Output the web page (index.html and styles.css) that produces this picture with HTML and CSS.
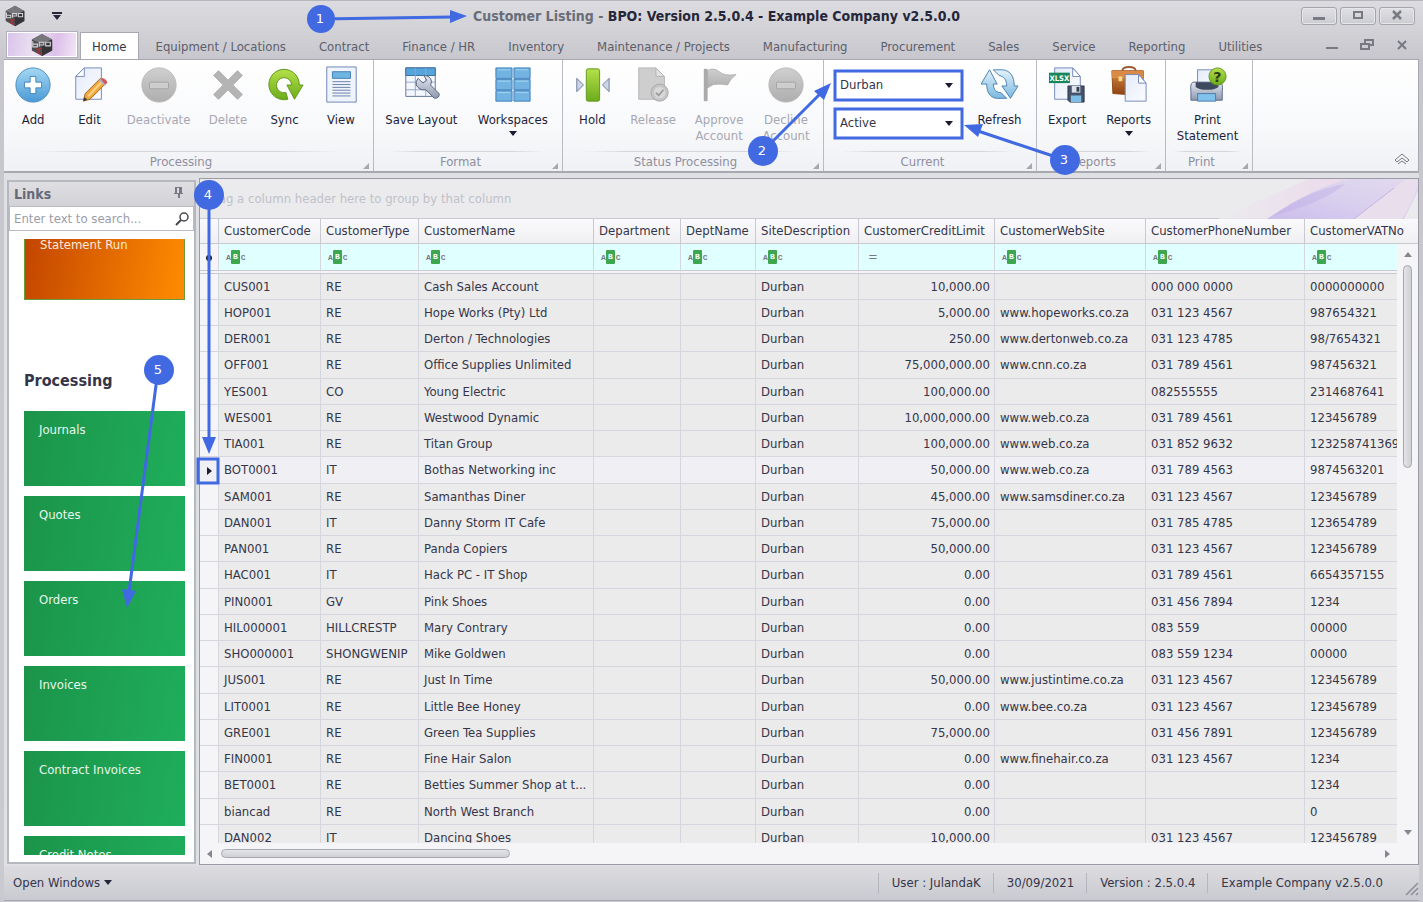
FILE: index.html
```html
<!DOCTYPE html>
<html lang="en">
<head>
<meta charset="UTF-8">
<meta name="viewport" content="width=device-width, initial-scale=1.0">
<title>Customer Listing - BPO</title>
<link rel="stylesheet" href="styles.css">
</head>
<body>

<!-- shared gradients and symbols -->
<svg class="defs" aria-hidden="true">
    <defs>
        <linearGradient id="blue" x1="0" y1="0" x2="0" y2="1"><stop offset="0" stop-color="#a5d8f3"/><stop offset="1" stop-color="#4a9ad6"/></linearGradient>
        <linearGradient id="pale" x1="0" y1="0" x2="0" y2="1"><stop offset="0" stop-color="#e2f2fb"/><stop offset="1" stop-color="#7ab8e0"/></linearGradient>
        <linearGradient id="green" x1="0" y1="0" x2="0" y2="1"><stop offset="0" stop-color="#b4e04a"/><stop offset="1" stop-color="#6dab1b"/></linearGradient>
        <linearGradient id="grey" x1="0" y1="0" x2="0" y2="1"><stop offset="0" stop-color="#cfcfcf"/><stop offset="1" stop-color="#aeaeae"/></linearGradient>
        <linearGradient id="paper" x1="0" y1="0" x2="1" y2="1"><stop offset="0" stop-color="#e4ebfa"/><stop offset="1" stop-color="#fbfcff"/></linearGradient>
        <linearGradient id="brown" x1="0" y1="0" x2="0" y2="1"><stop offset="0" stop-color="#d98a3d"/><stop offset="1" stop-color="#8f4312"/></linearGradient>
        <linearGradient id="steel" x1="0" y1="0" x2="0" y2="1"><stop offset="0" stop-color="#e3e8f1"/><stop offset="1" stop-color="#8d99ae"/></linearGradient>
        <linearGradient id="violet" x1="0" y1="1" x2="1" y2="0"><stop offset="0" stop-color="#cbbdec"/><stop offset="0.5" stop-color="#d9d0ee"/><stop offset="1" stop-color="#e2daee"/></linearGradient>
        <linearGradient id="pink" x1="0" y1="0" x2="1" y2="0"><stop offset="0" stop-color="#ebebee"/><stop offset="1" stop-color="#ecd3ea"/></linearGradient>
    </defs>
    <symbol id="minus" viewBox="0 0 40 40">
        <circle cx="20" cy="20" r="18" fill="url(#grey)" stroke="#b8b8b8"/>
        <rect x="10" y="17" width="20" height="7" rx="1" fill="#cdcdcd" stroke="#a2a2a2"/>
    </symbol>
    <symbol id="logo" viewBox="0 0 26 26">
        <path d="M13 1l11 6v12l-11 6-11-6V7z" fill="#4b4b50"/>
        <path d="M13 1l11 6-11 5L2 7z" fill="#77777c"/>
        <path d="M13 12v13l11-6V7z" fill="#343438"/>
        <path d="M3 9v6h5v-3H3M10 15v-5h5v3h-5M17 10h5v4h-5z" fill="none" stroke="#d4d4d8" stroke-width="1.2"/>
        <path d="M7 18l4-1-3 4 5 2" fill="none" stroke="#b03030" stroke-width="1.4"/>
    </symbol>
    <symbol id="corner" viewBox="0 0 6 6"><path d="M6 0v6H0z" fill="#a7a8ae"/></symbol>
    <symbol id="down" viewBox="0 0 10 6"><path d="M0 0h10L5 6z" fill="#1c1c30"/></symbol>
</svg>

<div class="window">

    <header class="titlebar">
        <svg class="app-icon"><use href="#logo"/></svg>
        <button class="quick" aria-label="Customize toolbar"><svg width="10" height="8"><path d="M0 0h10v2H0zM1 3h8L5 8z" fill="#26263a"/></svg></button>
        <h1><span>Customer Listing -</span> BPO: Version 2.5.0.4 - Example Company v2.5.0.0</h1>
        <div class="win-buttons">
            <button aria-label="Minimize"><svg width="12" height="12"><path d="M0 8h12v3H0z" fill="#777983"/></svg></button>
            <button aria-label="Maximize"><svg width="12" height="12"><path d="M2 3h8v6H2z" fill="none" stroke="#777983" stroke-width="2"/></svg></button>
            <button aria-label="Close"><svg width="12" height="12"><path d="M2 2l8 8M10 2l-8 8" stroke="#777983" stroke-width="2.5"/></svg></button>
        </div>
    </header>

    <nav class="tabs">
        <button class="app-menu" aria-label="Application menu"><svg><use href="#logo"/></svg></button>
        <a href="#" class="tab active">Home</a>
        <a href="#" class="tab">Equipment / Locations</a>
        <a href="#" class="tab">Contract</a>
        <a href="#" class="tab">Finance / HR</a>
        <a href="#" class="tab">Inventory</a>
        <a href="#" class="tab">Maintenance / Projects</a>
        <a href="#" class="tab">Manufacturing</a>
        <a href="#" class="tab">Procurement</a>
        <a href="#" class="tab">Sales</a>
        <a href="#" class="tab">Service</a>
        <a href="#" class="tab">Reporting</a>
        <a href="#" class="tab">Utilities</a>
        <div class="mdi-buttons">
            <button aria-label="Minimize child"><svg width="14" height="12"><path d="M1 8h12v2H1z" fill="#777983"/></svg></button>
            <button aria-label="Restore child"><svg width="14" height="12"><path d="M5 4V1h8v5h-3M1 5h8v5H1z" fill="none" stroke="#777983" stroke-width="2"/></svg></button>
            <button aria-label="Close child"><svg width="14" height="12"><path d="M3 2l8 8M11 2l-8 8" stroke="#777983" stroke-width="2"/></svg></button>
        </div>
    </nav>

    <div class="ribbon">
        <section class="group g-processing">
            <div class="items">
                <button class="big">
                    <svg viewBox="0 0 40 40"><circle cx="20" cy="20" r="18" fill="url(#blue)" stroke="#4a8cc2"/><path d="M17 11h6v6h6v6h-6v6h-6v-6h-6v-6h6z" fill="#fff" stroke="#4484ba"/></svg>
                    Add
                </button>
                <button class="big">
                    <svg viewBox="0 0 40 40"><path d="M14 2h18v33H5V11z" fill="url(#paper)" stroke="#7387b8"/><path d="M14 2v9H5z" fill="#fff" stroke="#7387b8"/><path d="M13 37l2-8L31 13l6 5-17 17z" fill="#f2a83a" stroke="#9a6320"/><path d="M18 32L34 15" stroke="#fbd68c" stroke-width="2"/><path d="M29 15l4-2 5 4-2 4z" fill="#aab4cc"/><path d="M32 14q3-2 6 3l-2 2z" fill="#d8525a" stroke="#d8525a"/><path d="M13 37l1-4 3 2z" fill="#333"/></svg>
                    Edit
                </button>
                <button class="big" disabled><svg><use href="#minus"/></svg>Deactivate</button>
                <button class="big" disabled>
                    <svg viewBox="0 0 40 40"><path d="M10 5l10 10L30 5l5 5-10 10 10 10-5 5-10-10-10 10-5-5 10-10L5 10z" fill="#b4b4b4" stroke="#a8a8a8" stroke-linejoin="round"/></svg>
                    Delete
                </button>
                <button class="big">
                    <svg viewBox="0 0 40 40"><path d="M23 35A16 16 0 1 1 35 20h4l-9 15-8-15h5a8 8 0 1 0-6 8z" fill="url(#green)" stroke="#5c971a" stroke-linejoin="round"/></svg>
                    Sync
                </button>
                <button class="big">
                    <svg viewBox="0 0 40 40"><path d="M5 1h31v37H5z" fill="#eef3fc" stroke="#6d83b4"/><path d="M11 6h19v7H11z" fill="#6eb5e2" stroke="#427fae"/><path d="M11 16.500h19M11 19.500h19M11 22.500h19M11 25.500h19M11 28.500h19M11 31.500h19" stroke="#6c7fa6"/></svg>
                    View
                </button>
            </div>
            <footer>Processing<svg><use href="#corner"/></svg></footer>
        </section>

        <section class="group g-format">
            <div class="items">
                <button class="big">
                    <svg viewBox="0 0 40 40"><path d="M4 2h31v30H4z" fill="#f4f7fd" stroke="#5f7299"/><path d="M4 2h31v8H4z" fill="#55a5dc" stroke="#3a6f9f"/><path d="M4 17h31M4 25h31M14 2v30M25 2v30" stroke="#8fa4cb"/><path d="M17 13l5 5 4-3-3-5q7 0 8 6 0 2-1 4l9 9q1 5-5 5l-9-9q-7 1-10-5-1-4 2-7z" fill="url(#steel)" stroke="#56617a"/></svg>
                    Save Layout
                </button>
                <button class="big">
                    <svg viewBox="0 0 40 40"><path d="M2 2h17v11H2zM21 2h17v11H21zM2 14h17v11H2zM21 14h17v11H21zM2 26h17v11H2zM21 26h17v11H21z" fill="#73b3e2" stroke="#3d7fba"/><path d="M4 4h13M23 4h13M4 16h13M23 16h13M4 28h13M23 28h13" stroke="#a8d5f1"/></svg>
                    Workspaces
                    <svg class="arrow"><use href="#down"/></svg>
                </button>
            </div>
            <footer>Format<svg><use href="#corner"/></svg></footer>
        </section>

        <section class="group g-status">
            <div class="items">
                <button class="big">
                    <svg viewBox="0 0 40 40"><rect x="14" y="3" width="14" height="34" rx="2" fill="url(#green)" stroke="#5d971c"/><path d="M4 13v14l7-7zM38 13v14l-7-7z" fill="#cbd6e8" stroke="#6b7896"/></svg>
                    Hold
                </button>
                <button class="big" disabled>
                    <svg viewBox="0 0 40 40"><path d="M5 2h18l9 9v24H5z" fill="#cecece" stroke="#b4b4b4"/><path d="M23 2v9h9z" fill="#e2e2e2" stroke="#b4b4b4"/><circle cx="27" cy="28" r="9" fill="#c5c5c5" stroke="#a8a8a8"/><circle cx="27" cy="28" r="6" fill="#d9d9d9"/><path d="M23 28l3 3 5-6" fill="none" stroke="#9e9e9e" stroke-width="2"/></svg>
                    Release
                </button>
                <button class="big" disabled>
                    <svg viewBox="0 0 40 40"><path d="M8 5q6-4 12 1t18 3q-6 4-9 11-5-1-9-1-6-1-12 4z" fill="url(#grey)" stroke="#b0b0b0"/><path d="M4 3h4v34H4z" fill="#aaa"/></svg>
                    Approve<br>Account
                </button>
                <button class="big" disabled><svg><use href="#minus"/></svg>Decline<br>Account</button>
            </div>
            <footer>Status Processing<svg><use href="#corner"/></svg></footer>
        </section>

        <section class="group g-current">
            <div class="items">
                <div class="combos">
                    <label class="combo"><select aria-label="Site"><option>Durban</option></select><svg><use href="#down"/></svg></label>
                    <label class="combo"><select aria-label="Status"><option>Active</option></select><svg><use href="#down"/></svg></label>
                </div>
                <button class="big">
                    <svg viewBox="0 0 40 40"><g fill="url(#pale)" stroke="#4a7fae" stroke-linejoin="round"><path d="M13 4h10c8 1 12 7 12 17h4l-8 13-9-13h5c0-7-3-10-8-11z"/><path d="M27 34H16C9 33 6 27 6 19H0L9 4l8 15h-4c0 6 3 9 8 9z"/></g></svg>
                    Refresh
                </button>
            </div>
            <footer>Current<svg><use href="#corner"/></svg></footer>
        </section>

        <section class="group g-reports">
            <div class="items">
                <button class="big">
                    <svg viewBox="0 0 40 40"><path d="M7 2h19l8 9v24H7z" fill="url(#paper)" stroke="#7387b8"/><path d="M26 2v9h8z" fill="#fff" stroke="#7387b8"/><path d="M1 7h22v11H1z" fill="#17875a"/><text x="12" y="16" class="xlsx" text-anchor="middle">XLSX</text><path d="M21 21h17v17H23l-2-2z" fill="#46536a" stroke="#2e394d"/><path d="M25 21h9v7h-9z" fill="#dbe3ef"/><path d="M30 22h3v5h-3z" fill="#333c4c"/><path d="M24 31h11v7H24z" fill="#7dbde6"/></svg>
                    Export
                </button>
                <button class="big">
                    <svg viewBox="0 0 40 40"><path d="M13 5q0-4 7-4t7 4" fill="none" stroke="#9a5a34" stroke-width="2"/><path d="M2 5h33v6l-1 18q-14 2-31 0z" fill="url(#brown)" stroke="#8e4b1c"/><path d="M2 5h33v8H2z" fill="#d98b45"/><path d="M9 11h4v5H9z" fill="#f6d98b"/><path d="M16 9h14l8 9v19H16z" fill="url(#paper)" stroke="#7387b8"/><path d="M30 9v9h8z" fill="#fff" stroke="#7387b8"/></svg>
                    Reports
                    <svg class="arrow"><use href="#down"/></svg>
                </button>
            </div>
            <footer>Reports<svg><use href="#corner"/></svg></footer>
        </section>

        <section class="group g-print">
            <div class="items">
                <button class="big">
                    <svg viewBox="0 0 40 40"><path d="M9 4h20v18H9z" fill="url(#paper)" stroke="#7387b8"/><path d="M4 17q-3 2-2 9v10h33V26q1-7-2-9z" fill="url(#steel)" stroke="#59688c"/><path d="M7 17h24v5q-4 3-12 3T7 22z" fill="#3f495e"/><path d="M9 29h19v8H9z" fill="#80c2ec" stroke="#4b7aa6"/><circle cx="30" cy="11" r="9" fill="url(#green)" stroke="#5c971a"/><text x="30" y="17" class="help" text-anchor="middle">?</text></svg>
                    Print<br>Statement
                </button>
            </div>
            <footer>Print<svg><use href="#corner"/></svg></footer>
        </section>

        <button class="collapse" aria-label="Collapse ribbon"><svg width="16" height="12"><path d="M1 7l7-6 7 6-2 2-5-4-5 4zM4 11l4-3 4 3" fill="#f4f4f6" stroke="#777983"/></svg></button>
    </div>

    <main>
        <aside class="links">
            <div class="links-head">
                <h2>Links</h2>
                <button aria-label="Pin"><svg width="10" height="11"><path d="M1 0h7v6h1v1H6v4H4V7H0V6h1z" fill="#777983"/><path d="M3 1h2v5H3z" fill="#dcdce0"/></svg></button>
            </div>
            <div class="search">
                <input type="text" placeholder="Enter text to search..." aria-label="Search links">
                <svg width="14" height="14"><circle cx="9" cy="5" r="4" fill="none" stroke="#44444c" stroke-width="1.500"/><path d="M6 8l-5 5" stroke="#44444c" stroke-width="2"/></svg>
            </div>
            <div class="tiles">
                <button class="tile orange">Statement Run</button>
                <h3>Processing</h3>
                <button class="tile">Journals</button>
                <button class="tile">Quotes</button>
                <button class="tile">Orders</button>
                <button class="tile">Invoices</button>
                <button class="tile">Contract Invoices</button>
                <button class="tile">Credit Notes</button>
            </div>
        </aside>

        <section class="grid">
            <div class="group-panel">
                <p>Drag a column header here to group by that column</p>
                <svg viewBox="0 0 200 40" width="200" height="40"><path d="M0 40L90 0h55L62 40z" fill="url(#pink)" opacity="0.8"/><path d="M50 40q30-12 50-24T144 0h15Q110 18 80 40z" fill="#f0f0f3"/><path d="M49 40Q95 8 132 0h68v40z" fill="url(#violet)"/><path d="M55 37q36-26 72-32-20 18-72 32z" fill="#bca9e6" opacity="0.4"/><path d="M136 40l52-40h12v6q-8 22-16 34z" fill="#e9dfec"/><path d="M136 40l40-31" stroke="#c9b2e4"/><path d="M200 12v28h-14z" fill="#ebebee"/></svg>
            </div>
            <div class="view">
                <table>
                    <colgroup><col class="c-mark"><col class="c-code"><col class="c-type"><col class="c-name"><col class="c-dept"><col class="c-deptname"><col class="c-site"><col class="c-limit"><col class="c-web"><col class="c-phone"><col></colgroup>
                    <thead>
                        <tr><th></th><th>CustomerCode</th><th>CustomerType</th><th>CustomerName</th><th>Department</th><th>DeptName</th><th>SiteDescription</th><th>CustomerCreditLimit</th><th>CustomerWebSite</th><th>CustomerPhoneNumber</th><th>CustomerVATNo</th></tr>
                        <tr class="filter"><td><i class="dot"></i></td><td><span class="abc">A<b>B</b>C</span></td><td><span class="abc">A<b>B</b>C</span></td><td><span class="abc">A<b>B</b>C</span></td><td><span class="abc">A<b>B</b>C</span></td><td><span class="abc">A<b>B</b>C</span></td><td><span class="abc">A<b>B</b>C</span></td><td><span class="eq">=</span></td><td><span class="abc">A<b>B</b>C</span></td><td><span class="abc">A<b>B</b>C</span></td><td><span class="abc">A<b>B</b>C</span></td></tr>
                    </thead>
                    <tbody>
                        <tr><td></td><td>CUS001</td><td>RE</td><td>Cash Sales Account</td><td></td><td></td><td>Durban</td><td>10,000.00</td><td></td><td>000 000 0000</td><td>0000000000</td></tr>
                        <tr><td></td><td>HOP001</td><td>RE</td><td>Hope Works (Pty) Ltd</td><td></td><td></td><td>Durban</td><td>5,000.00</td><td>www.hopeworks.co.za</td><td>031 123 4567</td><td>987654321</td></tr>
                        <tr><td></td><td>DER001</td><td>RE</td><td>Derton / Technologies</td><td></td><td></td><td>Durban</td><td>250.00</td><td>www.dertonweb.co.za</td><td>031 123 4785</td><td>98/7654321</td></tr>
                        <tr><td></td><td>OFF001</td><td>RE</td><td>Office Supplies Unlimited</td><td></td><td></td><td>Durban</td><td>75,000,000.00</td><td>www.cnn.co.za</td><td>031 789 4561</td><td>987456321</td></tr>
                        <tr><td></td><td>YES001</td><td>CO</td><td>Young Electric</td><td></td><td></td><td>Durban</td><td>100,000.00</td><td></td><td>082555555</td><td>2314687641</td></tr>
                        <tr><td></td><td>WES001</td><td>RE</td><td>Westwood Dynamic</td><td></td><td></td><td>Durban</td><td>10,000,000.00</td><td>www.web.co.za</td><td>031 789 4561</td><td>123456789</td></tr>
                        <tr><td></td><td>TIA001</td><td>RE</td><td>Titan Group</td><td></td><td></td><td>Durban</td><td>100,000.00</td><td>www.web.co.za</td><td>031 852 9632</td><td>1232587413698</td></tr>
                        <tr class="focused"><td><svg width="5" height="8"><path d="M0 0l5 4-5 4z" fill="#1c1c30"/></svg></td><td>BOT0001</td><td>IT</td><td>Bothas Networking inc</td><td></td><td></td><td>Durban</td><td>50,000.00</td><td>www.web.co.za</td><td>031 789 4563</td><td>9874563201</td></tr>
                        <tr><td></td><td>SAM001</td><td>RE</td><td>Samanthas Diner</td><td></td><td></td><td>Durban</td><td>45,000.00</td><td>www.samsdiner.co.za</td><td>031 123 4567</td><td>123456789</td></tr>
                        <tr><td></td><td>DAN001</td><td>IT</td><td>Danny Storm IT Cafe</td><td></td><td></td><td>Durban</td><td>75,000.00</td><td></td><td>031 785 4785</td><td>123654789</td></tr>
                        <tr><td></td><td>PAN001</td><td>RE</td><td>Panda Copiers</td><td></td><td></td><td>Durban</td><td>50,000.00</td><td></td><td>031 123 4567</td><td>123456789</td></tr>
                        <tr><td></td><td>HAC001</td><td>IT</td><td>Hack PC - IT Shop</td><td></td><td></td><td>Durban</td><td>0.00</td><td></td><td>031 789 4561</td><td>6654357155</td></tr>
                        <tr><td></td><td>PIN0001</td><td>GV</td><td>Pink Shoes</td><td></td><td></td><td>Durban</td><td>0.00</td><td></td><td>031 456 7894</td><td>1234</td></tr>
                        <tr><td></td><td>HIL000001</td><td>HILLCRESTP</td><td>Mary Contrary</td><td></td><td></td><td>Durban</td><td>0.00</td><td></td><td>083 559</td><td>00000</td></tr>
                        <tr><td></td><td>SHO000001</td><td>SHONGWENIP</td><td>Mike Goldwen</td><td></td><td></td><td>Durban</td><td>0.00</td><td></td><td>083 559 1234</td><td>00000</td></tr>
                        <tr><td></td><td>JUS001</td><td>RE</td><td>Just In Time</td><td></td><td></td><td>Durban</td><td>50,000.00</td><td>www.justintime.co.za</td><td>031 123 4567</td><td>123456789</td></tr>
                        <tr><td></td><td>LIT0001</td><td>RE</td><td>Little Bee Honey</td><td></td><td></td><td>Durban</td><td>0.00</td><td>www.bee.co.za</td><td>031 123 4567</td><td>123456789</td></tr>
                        <tr><td></td><td>GRE001</td><td>RE</td><td>Green Tea Supplies</td><td></td><td></td><td>Durban</td><td>75,000.00</td><td></td><td>031 456 7891</td><td>123456789</td></tr>
                        <tr><td></td><td>FIN0001</td><td>RE</td><td>Fine Hair Salon</td><td></td><td></td><td>Durban</td><td>0.00</td><td>www.finehair.co.za</td><td>031 123 4567</td><td>1234</td></tr>
                        <tr><td></td><td>BET0001</td><td>RE</td><td>Betties Summer Shop at t...</td><td></td><td></td><td>Durban</td><td>0.00</td><td></td><td></td><td>1234</td></tr>
                        <tr><td></td><td>biancad</td><td>RE</td><td>North West Branch</td><td></td><td></td><td>Durban</td><td>0.00</td><td></td><td></td><td>0</td></tr>
                        <tr><td></td><td>DAN002</td><td>IT</td><td>Dancing Shoes</td><td></td><td></td><td>Durban</td><td>10,000.00</td><td></td><td>031 123 4567</td><td>123456789</td></tr>
                    </tbody>
                </table>
                <div class="vscroll">
                    <svg width="8" height="5"><path d="M0 5h8L4 0z" fill="#85868e"/></svg>
                    <div class="track"><div class="thumb"></div></div>
                    <svg width="8" height="5"><path d="M0 0h8L4 5z" fill="#85868e"/></svg>
                </div>
            </div>
            <div class="hscroll">
                <svg width="5" height="8"><path d="M5 0v8L0 4z" fill="#85868e"/></svg>
                <div class="track"><div class="thumb"></div></div>
                <svg width="5" height="8"><path d="M0 0v8l5-4z" fill="#85868e"/></svg>
            </div>
        </section>
    </main>

    <footer class="status">
        <button>Open Windows <svg width="8" height="5"><path d="M0 0h8L4 5z" fill="#26263a"/></svg></button>
        <span>User : JulandaK</span>
        <span>30/09/2021</span>
        <span>Version : 2.5.0.4</span>
        <span>Example Company v2.5.0.0</span>
        <svg width="14" height="14"><path d="M1 13L13 1M6 13l7-7M11 13l2-2" stroke="#8c8d95" stroke-width="1.500"/></svg>
    </footer>
</div>

<!-- numbered callouts drawn over the window -->
<svg class="callouts" width="1423" height="902" viewBox="0 0 1423 902">
    <g fill="none" stroke="#4169e1" stroke-width="3">
        <path d="M320 19L452 17"/>
        <path d="M763 151L822 92"/>
        <path d="M1065 160L978 131"/>
        <path d="M209 195V440"/>
        <path d="M158 370L129 592"/>
        <rect x="835" y="71" width="127" height="29"/>
        <rect x="835" y="109" width="127" height="29"/>
        <rect x="198" y="459" width="20" height="24"/>
    </g>
    <g fill="#4169e1">
        <path d="M467 16l-17 7V10z"/>
        <path d="M831 83l-7 17-10-9z"/>
        <path d="M964 125l19-1-5 13z"/>
        <path d="M209 454l-7-17h14z"/>
        <path d="M127 608l-5-19 14 2z"/>
        <circle cx="321" cy="19" r="14"/>
        <circle cx="763" cy="151" r="15"/>
        <circle cx="1065" cy="160" r="15"/>
        <circle cx="209" cy="195" r="15"/>
        <circle cx="159" cy="370" r="15"/>
    </g>
    <g class="numbers" text-anchor="middle">
        <text x="320" y="23">1</text>
        <text x="762" y="155">2</text>
        <text x="1064" y="164">3</text>
        <text x="208" y="199">4</text>
        <text x="158" y="374">5</text>
    </g>
</svg>

</body>
</html>
```
FILE: styles.css
```css
* {
    box-sizing: border-box;
}
body {
    margin: 0;
    font-family: "DejaVu Sans Condensed", "Noto Sans", sans-serif;
    font-size: 13px;
    line-height: 16px;
    color: #35354a;
}
h1, h2, h3, p {
    margin: 0;
}
button, select, input {
    font: inherit;
    color: inherit;
    padding: 0;
    border: 0;
    background: none;
}
a {
    color: inherit;
    text-decoration: none;
}
.defs {
    position: absolute;
    width: 0;
    height: 0;
}
.window {
    display: flex;
    flex-direction: column;
    height: 100vh;
    padding: 0 4px 1px;
    overflow: hidden;
    background: linear-gradient(#dcdce0, #c6c6cc 60px, #c9cad0);
    border-top: 1px solid #b4b5bd;
}

/* title bar */
.titlebar {
    display: flex;
    align-items: center;
    height: 30px;
    padding-right: 4px;
}
.app-icon {
    width: 22px;
    height: 22px;
}
.quick {
    width: 62px;
    line-height: 8px;
}
.titlebar h1 {
    flex: 1;
    padding-left: 44px;
    font-size: 14px;
    text-align: center;
    color: #26263a;
}
.titlebar h1 span {
    color: #686d79;
}
.win-buttons {
    display: flex;
    gap: 3px;
}
.win-buttons button {
    width: 36px;
    height: 18px;
    border: 1px solid #a3a4ac;
    border-radius: 3px;
    background: linear-gradient(#e0e0e4, #cbccd1);
    box-shadow: inset 0 0 0 1px #e6e6ea;
    line-height: 12px;
}

/* ribbon tabs */
.tabs {
    display: flex;
    align-items: flex-end;
    gap: 7px;
    height: 28px;
    padding-left: 3px;
}
.app-menu {
    width: 70px;
    height: 25px;
    margin-bottom: 2px;
    border: 1px solid #fff;
    outline: 1px solid #b4b0c4;
    background: linear-gradient(100deg, #d9c3ea, #ece2f2 40%, #dcc0ea 70%, #f2e6f5);
    line-height: 0;
}
.app-menu svg {
    width: 26px;
    height: 24px;
}
.tab {
    height: 27px;
    padding: 6px 12px 0;
    border: 1px solid transparent;
    border-bottom: 0;
    color: #5c5e6c;
}
.tab.active {
    margin: 0 -3px 0 -4px;
    padding: 6px 11px 0;
    border-color: #a7a8b1;
    background: #fff;
    color: #35354a;
}
.mdi-buttons {
    display: flex;
    gap: 21px;
    margin: 0 10px 4px auto;
}

/* ribbon */
.ribbon {
    display: flex;
    height: 114px;
    border: 1px solid #a7a8b1;
    border-width: 1px 1px 2px 0;
    background: linear-gradient(#fff, #f8f9fb 60%, #f0f1f4);
}
.group {
    display: flex;
    flex-direction: column;
    padding: 0 4px 0 1px;
    border-right: 1px solid #b9bac2;
}
.g-processing { min-width: 370px; }
.g-format { min-width: 189px; }
.g-status { min-width: 261px; }
.g-current { min-width: 213px; }
.g-reports { min-width: 129px; }
.g-print { min-width: 87px; }
.items {
    display: flex;
    flex: 1;
}
.big {
    flex: 1 1 auto;
    min-width: 56px;
    padding: 6px 8px 0;
    display: flex;
    flex-direction: column;
    align-items: center;
    color: #1f1f38;
}
.big:disabled {
    color: #a7a7b1;
}
.big svg {
    width: 38px;
    height: 38px;
    margin-bottom: 8px;
}
.big .arrow {
    width: 8px;
    height: 5px;
    margin-top: 3px;
}
.group footer {
    display: flex;
    justify-content: center;
    align-items: center;
    height: 20px;
    color: #8e8f9f;
    border-top: 1px solid;
    border-image: linear-gradient(90deg, transparent 8%, #d5d6dc 25%, #d5d6dc 75%, transparent 92%) 1;
}
.group footer svg {
    width: 12px;
    height: 6px;
    padding-left: 6px;
    margin: 8px 0 0 auto;
}
.group footer::before {
    content: "";
    margin-right: auto;
}
.combos {
    display: flex;
    flex-direction: column;
    gap: 10px;
    padding: 11px 6px 0 8px;
}
.combo {
    display: flex;
    align-items: center;
    width: 128px;
    height: 28px;
}
.combo select {
    width: 100%;
    height: 100%;
    padding: 0 7px;
    appearance: none;
    background: #fff;
}
.combo svg {
    flex: none;
    width: 8px;
    height: 5px;
    margin-left: -16px;
    pointer-events: none;
}
.collapse {
    align-self: flex-end;
    margin: 0 8px 2px auto;
}
.xlsx {
    font: bold 8px "DejaVu Sans Condensed", sans-serif;
    fill: #fff;
}
.help {
    font: bold 15px "DejaVu Sans", sans-serif;
    fill: #2c3b14;
}

/* main area */
main {
    display: flex;
    flex: 1;
    min-height: 0;
    gap: 3px;
    padding: 5px 0 1px 3px;
    background: #dfe0e4;
}
.links {
    display: flex;
    flex-direction: column;
    width: 189px;
    margin: 2px 0 1px;
    border: 2px solid #b6b8c0;
    background: #fff;
}
.links-head {
    display: flex;
    justify-content: space-between;
    align-items: center;
    height: 24px;
    padding: 0 10px 0 5px;
    background: linear-gradient(#dfdfe2, #d3d3d7);
}
.links-head h2 {
    font-size: 14px;
    color: #666977;
}
.search {
    display: flex;
    align-items: center;
    height: 25px;
    padding: 0 4px;
    border: 1px solid #b9bac2;
}
.search input {
    flex: 1;
    min-width: 0;
    outline: 0;
}
.search input::placeholder {
    color: #9b9ca8;
}
.tiles {
    flex: 1;
    min-height: 0;
    margin: 8px 9px 7px 15px;
    overflow: hidden;
}
.tile {
    display: flex;
    width: 100%;
    height: 75px;
    margin-bottom: 10px;
    padding: 11px 15px;
    background: linear-gradient(100deg, #1b9449, #1fae5b);
    color: #e9f7ee;
}
/* the list is scrolled, so the first tile starts above the edge */
.tile.orange {
    margin: -14px 0 0;
    border: 1px solid #6c9a3a;
    background: linear-gradient(100deg, #c24400, #ff8c00);
    color: #fbe9dc;
}
.tiles h3 {
    padding: 70px 0 19px;
    font-size: 16px;
    line-height: 22px;
}

/* grid */
.grid {
    display: flex;
    flex-direction: column;
    flex: 1;
    min-width: 0;
    border: 1px solid #9a9ba6;
    background: #f5f5f8;
}
.group-panel {
    display: flex;
    justify-content: space-between;
    align-items: center;
    height: 40px;
    padding-left: 5px;
    background: #ebebee;
    color: #c0c1c8;
    border-bottom: 1px solid #c9cad1;
}
.view {
    position: relative;
    flex: 1;
    min-height: 0;
    overflow: hidden;
}
table {
    width: 100%;
    table-layout: fixed;
    border-collapse: separate;
    border-spacing: 0;
}
.c-mark { width: 19px; }
.c-code { width: 102px; }
.c-type { width: 98px; }
.c-name { width: 175px; }
.c-dept { width: 87px; }
.c-deptname { width: 75px; }
.c-site { width: 103px; }
.c-limit { width: 136px; }
.c-web { width: 151px; }
.c-phone { width: 159px; }
th, td {
    height: 26px;
    padding: 0 4px 0 5px;
    border-right: 1px solid #d6d7de;
    border-bottom: 1px solid #d6d7de;
    text-align: left;
    font-weight: normal;
    white-space: nowrap;
    overflow: hidden;
}
th {
    height: 25px;
    background: linear-gradient(#fafafc, #f0f0f3);
    border-color: #c9cad1;
}
.filter td {
    height: 30px;
    background: #e0ffff;
    background-clip: padding-box;
    border-bottom: 4px double #c9cad1;
}
th:last-child, td:last-child {
    border-right: 0;
}
tbody td {
    background: #ebebeb;
}
/* average row pitch is a quarter pixel over 26 */
tbody tr:nth-child(4n) td {
    height: 27px;
}
td:first-child {
    padding: 0;
    text-align: center;
    background: #f5f5f8;
}
td:first-child svg {
    vertical-align: middle;
}
td:nth-child(8) {
    text-align: right;
}
.filter td:nth-child(8) {
    text-align: left;
}
.focused td {
    background: #f0f0f4;
}
.dot {
    display: inline-block;
    width: 6px;
    height: 6px;
    border-radius: 3px;
    background: #1c1c30;
}
.abc {
    display: flex;
    align-items: center;
    padding-left: 2px;
    font: bold 8px "Liberation Mono", monospace;
    color: #777983;
}
.abc b {
    width: 9px;
    margin: 0 1px 0 0;
    line-height: 14px;
    text-align: center;
    background: #3fa650;
    color: #fff;
    border-radius: 1px;
}
.eq {
    padding-left: 4px;
    color: #777983;
}
.vscroll {
    position: absolute;
    top: 25px;
    right: 0;
    bottom: 0;
    display: flex;
    flex-direction: column;
    align-items: center;
    width: 21px;
    padding: 8px 0;
    background: #f5f5f8;
}
.vscroll .track {
    flex: 1;
    padding-top: 8px;
}
.vscroll .thumb {
    width: 9px;
    height: 36%;
    border: 1px solid #a7a8b1;
    border-radius: 5px;
    background: linear-gradient(90deg, #e3e4e8, #cfd0d6);
}
.hscroll {
    display: flex;
    align-items: center;
    height: 21px;
    padding: 0 28px 0 7px;
}
.hscroll .track {
    flex: 1;
    padding: 0 9px;
}
.hscroll .thumb {
    width: 25%;
    height: 9px;
    border: 1px solid #a7a8b1;
    border-radius: 5px;
    background: linear-gradient(#e3e4e8, #cfd0d6);
}

/* status bar */
.status {
    display: flex;
    align-items: center;
    height: 35px;
    padding: 0 0 0 9px;
    border: 1px solid #a7a8b1;
    border-width: 0 0 1px;
    background: linear-gradient(#dcdce0, #c9cad0);
}
.status button {
    margin-right: auto;
}
.status button svg {
    vertical-align: middle;
    margin-bottom: 3px;
}
.status span {
    padding: 2px 12px 2px 13px;
    border-left: 1px solid #b4b5bd;
}
.status > svg {
    align-self: flex-end;
    margin: 0 0 4px 10px;
}

.callouts {
    position: absolute;
    top: 0;
    left: 0;
    pointer-events: none;
}
.numbers {
    font-family: "DejaVu Sans", sans-serif;
    font-size: 13px;
    fill: #fff;
}
```
